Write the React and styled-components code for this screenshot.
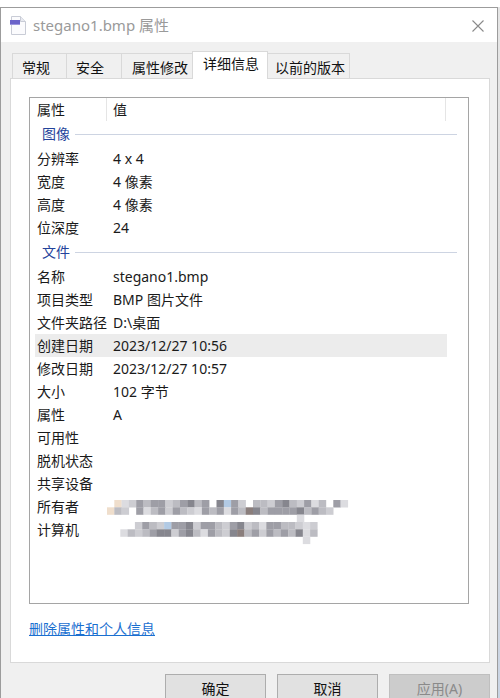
import React from 'react';
import styled, { createGlobalStyle } from 'styled-components';

const GlobalStyle = createGlobalStyle`
  html, body {
    margin: 0;
    padding: 0;
    background: #ffffff;
  }
  body {
    font-family: "Noto Sans", "Noto Sans CJK SC", sans-serif;
    color: #1a1a1a;
  }
`;

const Page = styled.div`
  width: 500px;
  height: 698px;
  overflow: hidden;
  display: flex;
  flex-direction: column;
`;

const Backdrop = styled.div`
  flex-shrink: 0;
  height: 7px;
  overflow: hidden;
  background: #fff;
`;

const Screen = styled.div`
  display: flex;
  flex: 1;
  min-height: 0;
  overflow: hidden;
`;

const Dialog = styled.div`
  box-sizing: border-box;
  width: 498px;
  flex-shrink: 0;
  border: 1px solid #9c9c9c;
  border-bottom: none;
  display: flex;
  flex-direction: column;
  background: #f0f0f0;
`;

const SideStrip = styled.div`
  flex: 1;
  background: linear-gradient(#e6e6e6, #dcdcdc 60%, #c9d4e4);
`;

const TitleBar = styled.div`
  flex-shrink: 0;
  height: 34px;
  background: #fff;
  display: flex;
  align-items: center;
  padding: 0 10px 0 9px;
`;

const TitleText = styled.div`
  flex: 1;
  margin-left: 7px;
  font-size: 15px;
  color: #9a9a9a;
  line-height: 20px;
`;

const CloseBtn = styled.div`
  width: 16px;
  height: 16px;
  margin-right: 1px;
  margin-top: -1px;
`;

const Body = styled.div`
  flex-shrink: 0;
  padding: 9px 7px 0 9px;
`;

const TabRow = styled.div`
  display: flex;
  align-items: flex-end;
  padding-left: 2px;
  margin-bottom: -1px;
  position: relative;
  z-index: 1;
`;

const Tab = styled.div`
  box-sizing: border-box;
  width: ${(p) => p.$w}px;
  height: ${(p) => (p.$active ? 28 : 25)}px;
  margin-bottom: ${(p) => (p.$active ? 0 : 1)}px;
  margin-left: -1px;
  padding-left: ${(p) => p.$pad}px;
  padding-top: ${(p) => (p.$active ? 3 : 5)}px;
  background: ${(p) => (p.$active ? '#ffffff' : '#f0f0f0')};
  border: 1px solid #d9d9d9;
  border-bottom: none;
  font-size: 14px;
  line-height: 18px;
  color: #111;
  white-space: nowrap;
  &:first-child {
    margin-left: 0;
  }
`;

const Panel = styled.div`
  box-sizing: border-box;
  height: 585px;
  background: #fff;
  border: 1px solid #d9d9d9;
  padding: 18px 20px 0 18px;
  display: flex;
  flex-direction: column;
`;

const ListBox = styled.div`
  box-sizing: border-box;
  flex-shrink: 0;
  height: 507px;
  border: 1px solid #a5a5a5;
  background: #fff;
`;

const HeaderRow = styled.div`
  display: grid;
  grid-template-columns: 77px 339px;
  height: 23px;
`;

const HeaderCell = styled.div`
  border-right: 1px solid #e5e5e5;
  padding-left: ${(p) => p.$pad}px;
  font-size: 14px;
  line-height: 23px;
  color: #1a1a1a;
`;

const GroupRow = styled.div`
  height: 26px;
  display: flex;
  align-items: center;
  padding-left: 12px;
  padding-right: 11px;
`;

const GroupTitle = styled.span`
  font-size: 14px;
  line-height: 18px;
  color: #24439b;
`;

const GroupLine = styled.div`
  flex: 1;
  height: 1px;
  margin-left: 5px;
  background: #cdd4e2;
`;

const Row = styled.div`
  display: grid;
  grid-template-columns: 72px 340px;
  height: 23px;
  margin-left: 5px;
  width: 412px;
  background: ${(p) => (p.$selected ? '#ececec' : 'transparent')};
`;

const Cell = styled.div`
  padding-left: ${(p) => p.$pad}px;
  font-size: 14px;
  line-height: 23px;
  color: #1a1a1a;
  white-space: nowrap;
  position: relative;
`;

const Mosaic = styled.svg`
  position: absolute;
  left: 0;
  top: ${(p) => p.$top}px;
  overflow: visible;
`;

const Link = styled.a`
  margin-top: 15px;
  font-size: 14px;
  line-height: 19px;
  color: #1a6fd0;
  text-decoration: underline;
  align-self: flex-start;
  cursor: pointer;
`;

const ButtonRow = styled.div`
  display: flex;
  justify-content: flex-end;
  gap: 11px;
  margin-top: 11px;
`;

const Button = styled.div`
  box-sizing: border-box;
  width: 101px;
  height: 30px;
  background: ${(p) => (p.$disabled ? '#cccccc' : '#e1e1e1')};
  border: 1px solid ${(p) => (p.$disabled ? '#bfbfbf' : '#adadad')};
  color: ${(p) => (p.$disabled ? '#8a8a8a' : '#111')};
  font-size: 14px;
  text-align: center;
  line-height: 28px;
`;

const tabs = [
  { label: '常规', w: 55, pad: 9 },
  { label: '安全', w: 56, pad: 9 },
  { label: '属性修改', w: 72, pad: 10 },
  { label: '详细信息', w: 76, pad: 10, active: true },
  { label: '以前的版本', w: 83, pad: 7 },
];

const palette = {
  a: '#dcdce0',
  b: '#bcbcc2',
  c: '#9e9ea6',
  d: '#86868e',
  e: '#b2cae4',
  f: '#efdecc',
  g: '#8a7e7c',
  h: '#cdcdd2',
};

const ownerPattern = [
  '.fahcbcchbcdbc.dech.bbhcdbhcab.ca',
  'fbh.cabchcbhacbcacbgdbccccdbcbh..',
  '..........................a......',
];

const computerPattern = [
  '...hcbheccdhccbhcdhbaccbbhah.',
  '.abhbcddhcdbacbhdgbchcbcbdab.',
  '..........................a..',
];

function PixelBlur({ pattern, top, left }) {
  const size = 7.3;
  const cells = [];
  pattern.forEach((line, r) => {
    line.split('').forEach((ch, c) => {
      if (palette[ch]) {
        cells.push(
          <rect
            key={`${r}-${c}`}
            x={left + c * size}
            y={r * size}
            width={size + 0.2}
            height={size + 0.2}
            fill={palette[ch]}
          />
        );
      }
    });
  });
  return (
    <Mosaic $top={top} width="250" height="22">
      {cells}
    </Mosaic>
  );
}

const sections = [
  {
    title: '图像',
    rows: [
      ['分辨率', '4 x 4'],
      ['宽度', '4 像素'],
      ['高度', '4 像素'],
      ['位深度', '24'],
    ],
  },
  {
    title: '文件',
    rows: [
      ['名称', 'stegano1.bmp'],
      ['项目类型', 'BMP 图片文件'],
      ['文件夹路径', 'D:\\桌面'],
      ['创建日期', '2023/12/27 10:56', true],
      ['修改日期', '2023/12/27 10:57'],
      ['大小', '102 字节'],
      ['属性', 'A'],
      ['可用性', ''],
      ['脱机状态', ''],
      ['共享设备', ''],
      ['所有者', 'owner'],
      ['计算机', 'computer'],
    ],
  },
];

function FileIcon() {
  return (
    <svg width="16" height="19" viewBox="0 0 16 19">
      <path d="M1.5 0.5 H10.5 L15.5 5.5 V18.5 H1.5 Z" fill="#fbfbfd" stroke="#c9ccd6" />
      <path d="M10.5 0.5 V5.5 H15.5" fill="#e8eaf0" stroke="#c9ccd6" />
      <rect x="0" y="4" width="10" height="4" fill="#6b63c9" />
      <rect x="0" y="8" width="10" height="1" fill="#9b95dc" />
    </svg>
  );
}

function CloseIcon() {
  return (
    <svg width="16" height="16" viewBox="0 0 16 16">
      <path d="M2.5 2.5 L13.5 13.5 M13.5 2.5 L2.5 13.5" stroke="#8a8a8a" strokeWidth="1.1" />
    </svg>
  );
}

function ToolbarGlimpse() {
  return (
    <svg width="500" height="7" viewBox="0 0 500 7">
      <g fill="none" stroke="#4a4a4a" strokeWidth="1.4">
        <path d="M34 -3 A7 7 0 0 0 39 6 M46 -3 A7 7 0 0 1 42 6" />
        <path d="M106 -2 V6 H122 V-2 M109 2 L113 -1 L117 2" />
        <path d="M178 -2 V6 H195 V-2 M183 3 L186.5 0 L190 3" />
        <path d="M263 -2 V4 L268 1 L274 4 V-2" />
        <path d="M311 -2 V6 H315 M320 -2 V6 M320 3 L326 0" />
        <path d="M378 -2 V6 H395 V-2 M378 2 H395" />
        <path d="M430 5 Q433 1 436 3 M440 -1 L444 3" />
        <path d="M483 6 L490 -1 M486 6 H496 M494 -1 L499 3" />
      </g>
      <path d="M60 1 H67 L63.5 5 Z" fill="#4a4a4a" />
    </svg>
  );
}

export default function App() {
  return (
    <Page>
      <GlobalStyle />
      <Backdrop>
        <ToolbarGlimpse />
      </Backdrop>
      <Screen>
        <Dialog>
          <TitleBar>
            <FileIcon />
            <TitleText>stegano1.bmp 属性</TitleText>
            <CloseBtn>
              <CloseIcon />
            </CloseBtn>
          </TitleBar>
          <Body>
            <TabRow>
              {tabs.map((t) => (
                <Tab key={t.label} $w={t.w} $pad={t.pad} $active={t.active}>
                  {t.label}
                </Tab>
              ))}
            </TabRow>
            <Panel>
              <ListBox>
                <HeaderRow>
                  <HeaderCell $pad={7}>属性</HeaderCell>
                  <HeaderCell $pad={6}>值</HeaderCell>
                </HeaderRow>
                {sections.map((s) => (
                  <React.Fragment key={s.title}>
                    <GroupRow>
                      <GroupTitle>{s.title}</GroupTitle>
                      <GroupLine />
                    </GroupRow>
                    {s.rows.map(([label, value, selected]) => (
                      <Row key={label} $selected={selected}>
                        <Cell $pad={2}>{label}</Cell>
                        <Cell $pad={6}>
                          {value === 'owner' ? (
                            <PixelBlur pattern={ownerPattern} top={5} left={0} />
                          ) : value === 'computer' ? (
                            <PixelBlur pattern={computerPattern} top={4} left={6} />
                          ) : (
                            value
                          )}
                        </Cell>
                      </Row>
                    ))}
                  </React.Fragment>
                ))}
              </ListBox>
              <Link>删除属性和个人信息</Link>
            </Panel>
            <ButtonRow>
              <Button>确定</Button>
              <Button>取消</Button>
              <Button $disabled>应用(A)</Button>
            </ButtonRow>
          </Body>
        </Dialog>
        <SideStrip />
      </Screen>
    </Page>
  );
}
